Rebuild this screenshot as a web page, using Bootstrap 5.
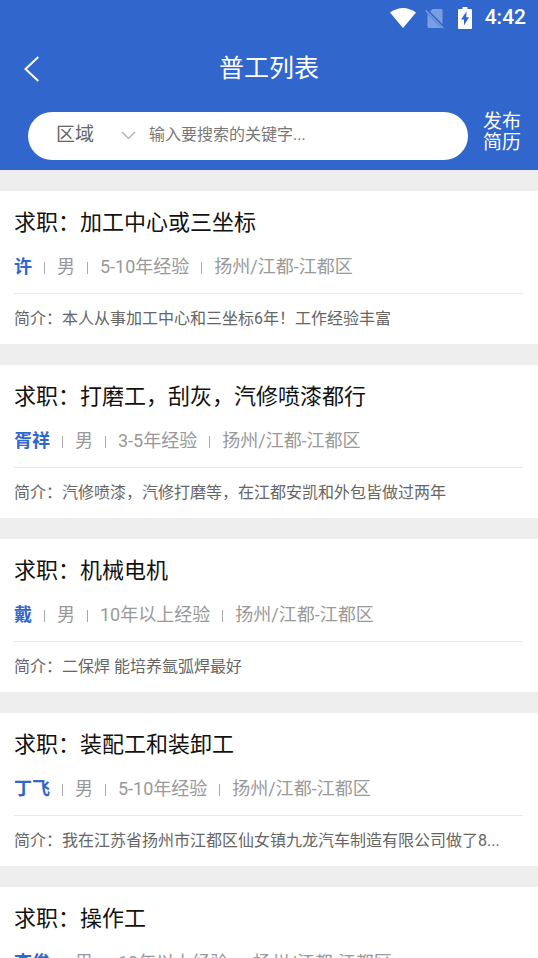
<!DOCTYPE html>
<html lang="zh-CN">
<head>
<meta charset="utf-8">
<meta name="viewport" content="width=device-width, initial-scale=1">
<title>普工列表</title>
<link href="https://cdn.jsdelivr.net/npm/bootstrap@5.3.0/dist/css/bootstrap.min.css" rel="stylesheet">
<style>
  body { background: #eee; color: #111; font-family: Roboto, "Noto Sans CJK SC", sans-serif; }
  .app-head { background: #3166cc; padding-bottom: 10px; }
  .status { height: 36px; padding: 0 12px; font-size: 21px; font-weight: 500; gap: 9px; }
  .title-bar { display: grid; grid-template-columns: 64px 1fr 64px; height: 66px; }
  .title-bar h1 { font-size: 25px; font-weight: 400; line-height: 36px; }
  .search-row { padding: 10px 16px 0 28px; gap: 15px; }
  .search-pill { height: 48px; padding: 0 24px 2px 28px; gap: 8px; min-width: 0; }
  .area { width: 85px; }
  .area select { appearance: none; font-size: 19px; line-height: 28px; color: #666; }
  .search-pill input { font-size: 16px; line-height: 24px; min-width: 0; outline: 0; color: #555; }
  .search-pill input::placeholder { color: #777; opacity: 1; }
  .area svg { pointer-events: none; margin-left: -20px; }
  .publish { font-size: 19px; line-height: 21px; width: 39px; margin-top: -8px; }
  .jobs { padding-top: 21px; gap: 21px; }
  .job { padding: 15px 15px 0 14px; }
  .job h2 { font-size: 22px; font-weight: 400; line-height: 34px; }
  .meta { font-size: 18px; line-height: 53px; color: #999; border-bottom: 1px solid #eaeaea; gap: 12px; }
  .meta strong { color: #3166cc; }
  .bar { width: 1px; height: 12px; background: #aaa; margin-top: 3px; }
  .intro { font-size: 16px; line-height: 50px; color: #666; }
</style>
</head>
<body>
<header class="app-head text-white">
  <div class="status d-flex align-items-center justify-content-end">
    <svg width="26" height="20" viewBox="0 0 26 20" fill="#fff" aria-hidden="true"><path d="M0 4.500Q13-4.500 26 4.500L13 20Z"/></svg>
    <svg width="20" height="21" viewBox="0 0 20 21" aria-hidden="true"><path fill="#7b9ee0" d="M7.500 1H16q1.500 0 1.500 1.500V16.200L5.100 3.400ZM2.500 6L16.500 20H4q-1.500 0-1.500-1.500Z"/><path d="M.700 2.500L18.300 20.300" stroke="#7b9ee0" stroke-width="1.500"/></svg>
    <svg class="ms-1" width="14" height="22" viewBox="0 0 14 22" aria-hidden="true"><path fill="#fff" d="M4.500 0h5v2H13q1 0 1 1v18q0 1-1 1H1q-1 0-1-1V3q0-1 1-1h3.500Z"/><path fill="#3166cc" d="M8.500 4.500L3 12.500H6V18.500L11 10.300H8.300Z"/></svg>
    <span class="ms-1">4:42</span>
  </div>
  <div class="title-bar align-items-center">
    <button type="button" class="btn border-0 p-0 text-start ps-4" aria-label="返回">
      <svg width="15" height="26" viewBox="0 0 15 26" fill="none" stroke="#fff" stroke-width="2" aria-hidden="true"><path d="M14.300 1L1.500 13L14.300 25"/></svg>
    </button>
    <h1 class="m-0 text-center">普工列表</h1>
  </div>
  <form class="search-row d-flex align-items-center">
    <div class="search-pill d-flex align-items-center flex-grow-1 bg-white rounded-pill">
      <div class="area d-flex align-items-center flex-shrink-0">
        <select class="w-100 border-0 bg-transparent p-0" aria-label="区域"><option>区域</option></select>
        <svg width="15" height="9" viewBox="0 0 15 9" fill="none" stroke="#b5b5b5" stroke-width="1.500" aria-hidden="true"><path d="M1 1L7.500 7.500L14 1"/></svg>
      </div>
      <input type="text" class="flex-grow-1 border-0 bg-transparent p-0" placeholder="输入要搜索的关键字..." aria-label="关键字">
    </div>
    <a href="#" class="publish text-white text-decoration-none flex-shrink-0">发布<br>简历</a>
  </form>
</header>
<main class="jobs d-flex flex-column">
  <article class="job bg-white">
    <h2 class="m-0 text-truncate">求职：加工中心或三坐标</h2>
    <div class="meta d-flex align-items-center text-nowrap"><strong>许</strong><i class="bar"></i><span>男</span><i class="bar"></i><span>5-10年经验</span><i class="bar"></i><span>扬州/江都-江都区</span></div>
    <p class="intro m-0 text-truncate">简介：本人从事加工中心和三坐标6年！工作经验丰富</p>
  </article>
  <article class="job bg-white">
    <h2 class="m-0 text-truncate">求职：打磨工，刮灰，汽修喷漆都行</h2>
    <div class="meta d-flex align-items-center text-nowrap"><strong>胥祥</strong><i class="bar"></i><span>男</span><i class="bar"></i><span>3-5年经验</span><i class="bar"></i><span>扬州/江都-江都区</span></div>
    <p class="intro m-0 text-truncate">简介：汽修喷漆，汽修打磨等，在江都安凯和外包皆做过两年</p>
  </article>
  <article class="job bg-white">
    <h2 class="m-0 text-truncate">求职：机械电机</h2>
    <div class="meta d-flex align-items-center text-nowrap"><strong>戴</strong><i class="bar"></i><span>男</span><i class="bar"></i><span>10年以上经验</span><i class="bar"></i><span>扬州/江都-江都区</span></div>
    <p class="intro m-0 text-truncate">简介：二保焊 能培养氩弧焊最好</p>
  </article>
  <article class="job bg-white">
    <h2 class="m-0 text-truncate">求职：装配工和装卸工</h2>
    <div class="meta d-flex align-items-center text-nowrap"><strong>丁飞</strong><i class="bar"></i><span>男</span><i class="bar"></i><span>5-10年经验</span><i class="bar"></i><span>扬州/江都-江都区</span></div>
    <p class="intro m-0 text-truncate">简介：我在江苏省扬州市江都区仙女镇九龙汽车制造有限公司做了8...</p>
  </article>
  <article class="job bg-white">
    <h2 class="m-0 text-truncate">求职：操作工</h2>
    <div class="meta d-flex align-items-center text-nowrap"><strong>李俊</strong><i class="bar"></i><span>男</span><i class="bar"></i><span>10年以上经验</span><i class="bar"></i><span>扬州/江都-江都区</span></div>
  </article>
</main>
<script src="https://cdn.jsdelivr.net/npm/bootstrap@5.3.0/dist/js/bootstrap.bundle.min.js"></script>
</body>
</html>
